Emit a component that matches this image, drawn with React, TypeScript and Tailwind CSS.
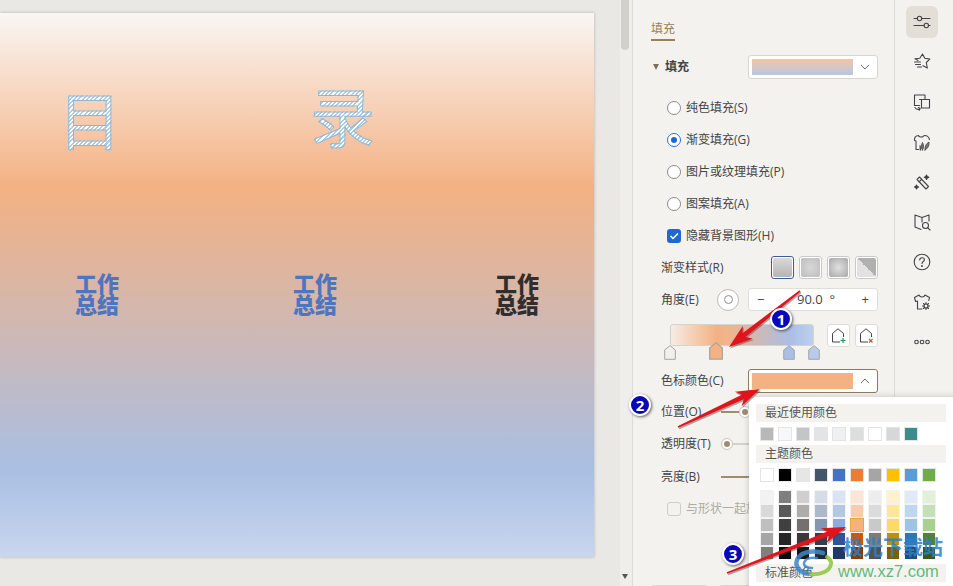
import React from "react";

const recent = ["#b8b8b8", "#f5f7fa", "#c4c5c6", "#e3e4e5", "#eef0f2", "#dcdddd", "#ffffff", "#d5d7d8", "#3f8a8c"];
const theme = ["#ffffff", "#000000", "#e7e6e6", "#44546a", "#4472c4", "#ed7d31", "#a5a5a5", "#ffc000", "#5b9bd5", "#70ad47"];
const shades = [
  ["#f2f2f2", "#d9d9d9", "#bfbfbf", "#a6a6a6", "#7f7f7f"],
  ["#7f7f7f", "#595959", "#404040", "#262626", "#0d0d0d"],
  ["#d0cece", "#aeabab", "#757070", "#3a3838", "#171616"],
  ["#d6dce5", "#adb9ca", "#8497b0", "#333f50", "#222a35"],
  ["#dae3f3", "#b4c7e7", "#8faadc", "#2f5597", "#203864"],
  ["#fbe5d6", "#f8cbad", "#f4b183", "#c55a11", "#843c0c"],
  ["#ededed", "#dbdbdb", "#c9c9c9", "#7b7b7b", "#525252"],
  ["#fff2cc", "#ffe699", "#ffd966", "#bf9000", "#7f6000"],
  ["#deebf7", "#bdd7ee", "#9dc3e6", "#2e75b6", "#1f4e79"],
  ["#e2f0d9", "#c5e0b4", "#a9d18e", "#548235", "#385723"],
];

function Icon({ children }: { children: React.ReactNode }) {
  return (
    <svg width="20" height="20" viewBox="0 0 20 20" fill="none" stroke="#444" strokeWidth="1.1" strokeLinecap="round" strokeLinejoin="round">
      {children}
    </svg>
  );
}

const railIcons = [
  <Icon key="a"><path d="M2 6.500h3.500M10 6.500h8M2 13.500h10M16.500 13.500h1.500" /><circle cx="7.500" cy="6.500" r="2.200" /><circle cx="14.300" cy="13.500" r="2.200" /></Icon>,
  <Icon key="b"><path d="M6 8.500L3 6.800l4.800-.6L10.500 2l2.300 4.300 5 .8-3.500 3.400 1 5.500-4.300-2.300" /><path d="M2.500 10h6M3.500 12.500h5M5.500 15h4" /></Icon>,
  <Icon key="c"><path d="M7.500 13.500H2.500V3H13v4.500" /><path d="M7.500 7.500h10V16H9.500V7.500z" /><path d="M3 15.500c1 1.800 3 2.200 5 1.200M6.500 15.500l1.700 1-1 1.800" /></Icon>,
  <Icon key="d"><path d="M6.500 3.500C4 3.500 2 5.500 2.500 8.500L4 9v8.500h3M6.500 3.500c.5 1.500 3 2 4.500 1 .5-.5 1-1 2-1 2 0 4 2 4.500 4" /><path d="M10.500 18c-1.500-2.500-1.500-5 0-7.500 1.500 2.500 1.500 5 0 7.500zM13 18c-.5-3 1-6.500 4-8 .5 3.500-1 6.500-4 8zM8.500 18c-.5-1.500-.8-3-.5-4.500 1.200 1.300 1.500 3 .5 4.500z" fill="#777" strokeWidth=".8" /></Icon>,
  <Icon key="e"><path d="M5 7.500L7.500 5l9 9.500-2.500 2.500zM7 10l2.500-2.500" /><path d="M14.500 3l.8 1.500 1.500.7-1.500.8-.8 1.500-.7-1.500-1.500-.8 1.500-.7zM4.500 13l.7 1.300 1.300.7-1.300.7-.7 1.300-.7-1.300L2.500 15l1.300-.7z" fill="#444" /></Icon>,
  <Icon key="f"><path d="M10 5.500L3 3v12l6 2.500M10 5.500L17 3v6M10 5.500V10" /><circle cx="13.500" cy="13.500" r="3" /><path d="M15.800 15.800l2.200 2.200" /></Icon>,
  <Icon key="g"><circle cx="10" cy="10" r="7.800" /><path d="M7.700 8c0-1.400 1-2.300 2.400-2.300s2.300.9 2.300 2c0 1.800-2.400 1.800-2.400 3.800" /><circle cx="10" cy="14" r=".4" fill="#444" /></Icon>,
  <Icon key="h"><path d="M7 3L2.500 5.500l1 4 2-.5v8H10M13 3l4.500 2.500-.7 3M7 3c.5 1.500 1.500 2 3 2s2.500-.5 3-2" /><circle cx="14" cy="14" r="2" /><path d="M14 10.500v1.500M14 16v1.500M10.500 14H12M16 14h1.500M11.500 11.500l1 1M15.500 15.500l1 1M16.500 11.500l-1 1M12.500 15.500l-1 1" /></Icon>,
  <Icon key="i"><circle cx="4.500" cy="10" r="1.800" /><circle cx="10" cy="10" r="1.800" /><circle cx="15.500" cy="10" r="1.800" /></Icon>,
];

function Radio({ label, on }: { label: string; on?: boolean }) {
  return (
    <div className="flex h-8 items-center gap-[5px] pl-[34px]">
      {on ? (
        <span className="flex h-[14px] w-[14px] items-center justify-center rounded-full border border-[#2a6fd6] bg-white">
          <span className="h-[6px] w-[6px] rounded-full bg-[#1f68d4]" />
        </span>
      ) : (
        <span className="h-[14px] w-[14px] rounded-full border border-[#8a8a8a] bg-white" />
      )}
      <span>{label}</span>
    </div>
  );
}

function StyleBtn({ bg, active }: { bg: string; active?: boolean }) {
  return (
    <div className={`flex h-[23px] w-[23px] items-center justify-center rounded-[3px] border ${active ? "border-[#3b5f95]" : "border-[#c9c9c9]"} bg-white p-[1px]`}>
      <div className="h-full w-full rounded-[2px]" style={{ background: bg }} />
    </div>
  );
}

function Stop({ color, big, ml }: { color: string; big?: boolean; ml: string }) {
  const w = big ? 16 : 12;
  const h = big ? 18 : 15;
  return (
    <svg width={w} height={h} viewBox="0 0 12 15" className={`absolute bottom-0 ${ml}`}>
      <path d="M.7 5L6 .7 11.300 5v9.300H.7z" fill={color} stroke="#a8a59f" strokeWidth="1" />
    </svg>
  );
}

function HouseBtn({ mark }: { mark: "add" | "del" }) {
  return (
    <div className="flex h-[23px] w-[23px] items-center justify-center rounded-[3px] border border-[#dedcd7] bg-white">
      <svg width="17" height="17" viewBox="0 0 17 17" fill="none" stroke="#444" strokeWidth="1">
        <path d="M10 15H2.500V6.500L8 1.800l5.500 4.700V10" />
        {mark === "add" ? (
          <path d="M13 11v5M10.500 13.500h5" stroke="#1f9a57" strokeWidth="1.200" />
        ) : (
          <path d="M11 12l3.500 3.500M14.500 12L11 15.500" stroke="#d8503f" strokeWidth="1.200" />
        )}
      </svg>
    </div>
  );
}

function Row({ label, children, mt }: { label: string; children?: React.ReactNode; mt: string }) {
  return (
    <div className={`flex items-center ${mt} pl-[28px] pr-[16px]`}>
      <span className="w-[60px] shrink-0 whitespace-nowrap">{label}</span>
      {children}
    </div>
  );
}

function Swatch({ c }: { c: string }) {
  return <div className="h-[14px] w-[14px] border border-[#e4e4e4]" style={{ background: c }} />;
}

function Arrow({ x1, y1, x2, y2 }: { x1: number; y1: number; x2: number; y2: number }) {
  const dx = x2 - x1;
  const dy = y2 - y1;
  const len = Math.hypot(dx, dy);
  const ux = dx / len;
  const uy = dy / len;
  const nx = -uy;
  const ny = ux;
  const headL = 24;
  const bx = x2 - ux * headL;
  const by = y2 - uy * headL;
  const inset = x2 - ux * (headL - 5);
  const insetY = y2 - uy * (headL - 5);
  const p = (x: number, y: number, n: number) => `${x + nx * n},${y + ny * n}`;
  const pts = [p(x1, y1, 0.8), p(inset, insetY, 2.4), p(bx, by, 8), `${x2},${y2}`, p(bx, by, -8), p(inset, insetY, -2.4), p(x1, y1, -0.8)].join(" ");
  return (
    <>
      <polygon points={pts} fill="#5a3a3a" opacity="0.45" transform="translate(1 1.500)" />
      <polygon points={pts} fill="#e0141c" />
    </>
  );
}

function Badge({ n, cls }: { n: string; cls: string }) {
  return (
    <div className={`absolute flex h-[22px] w-[22px] items-center justify-center rounded-full border-2 border-white bg-[#0707b8] text-[15px] font-bold text-white shadow-[1px_1px_3px_rgba(0,0,0,0.6)] ${cls}`}>
      {n}
    </div>
  );
}

function WorkText({ cls, color }: { cls: string; color: string }) {
  return (
    <div className={`absolute text-center text-[22px] leading-[21px] font-black tracking-[0px] ${cls}`} style={{ color }}>
      <div>工作</div>
      <div>总结</div>
    </div>
  );
}

const hatch =
  "text-transparent bg-clip-text bg-[repeating-linear-gradient(135deg,#ffffff_0px,#ffffff_1.5px,#a9cbe3_1.5px,#a9cbe3_3px)] [-webkit-text-stroke:1px_#94b3cc] font-normal";

export default function App() {
  return (
    <div className="relative flex h-[586px] w-[953px] overflow-hidden bg-[#e9e8e4] font-['Open_Sans','Noto_Sans_CJK_SC',sans-serif] text-[12px] text-[#444]">
      {/* canvas */}
      <div className="w-[620px] shrink-0 pt-[13px]">
        <div className="relative h-[544px] w-[594px] bg-[linear-gradient(180deg,#f9f6f4_0%,#f4b183_32%,#a9bfe3_84%,#c9d6ee_100%)] shadow-[0_0_3px_rgba(0,0,0,0.25)]">
          <div className={`absolute left-[59px] top-[73px] text-[62px] leading-[70px] ${hatch}`}>目</div>
          <div className={`absolute left-[310px] top-[69px] text-[65px] leading-[70px] ${hatch}`}>录</div>
          <WorkText cls="left-[75px] top-[260px]" color="#4f75bf" />
          <WorkText cls="left-[293px] top-[260px]" color="#4f75bf" />
          <WorkText cls="left-[495px] top-[260px]" color="#2f2f2f" />
        </div>
      </div>
      {/* scrollbar */}
      <div className="relative w-[13px] shrink-0 border-r border-[#dcdad5] bg-[#efeeea]">
        <div className="ml-[1px] h-[50px] w-[8px] rounded-b-[4px] bg-[#d2d0cb]" />
        <div className="absolute bottom-[7px] left-[2px] h-0 w-0 border-x-[3px] border-t-[5px] border-x-transparent border-t-[#555]" />
      </div>
      {/* panel */}
      <div className="w-[262px] shrink-0 border-r border-[#dcdad5] bg-[#f3f2ee]">
        <div className="ml-[18px] mt-[20px] w-fit border-b-2 border-[#9a8059] pb-[2px] leading-[17px] text-[#9a8059]">填充</div>
        <div className="mt-[14px] flex items-center pl-[20px] pr-[16px]">
          <span className="h-0 w-0 border-x-[3px] border-t-[6px] border-x-transparent border-t-[#7d705c]" />
          <span className="ml-[6px] font-bold">填充</span>
          <div className="ml-auto flex h-[24px] w-[130px] items-center rounded-[3px] border border-[#d8d6d1] bg-white pl-[3px]">
            <div className="h-[16px] w-[102px] bg-[linear-gradient(180deg,#f4c5a5,#b6c7e3)]" />
            <svg width="24" height="12" viewBox="0 0 24 12" fill="none" stroke="#666"><path d="M8 4l4 4 4-4" /></svg>
          </div>
        </div>
        <div className="mt-[13px]">
          <Radio label="纯色填充(S)" />
          <Radio label="渐变填充(G)" on />
          <Radio label="图片或纹理填充(P)" />
          <Radio label="图案填充(A)" />
          <div className="flex h-8 items-center gap-[5px] pl-[34px]">
            <span className="flex h-[14px] w-[14px] items-center justify-center rounded-[3px] bg-[#1f68d4]">
              <svg width="10" height="10" viewBox="0 0 10 10" fill="none" stroke="#fff" strokeWidth="1.500"><path d="M1.500 5l2.500 2.500 5-5" /></svg>
            </span>
            <span>隐藏背景图形(H)</span>
          </div>
        </div>
        <Row label="渐变样式(R)" mt="mt-[4px]">
          <div className="ml-auto flex w-[107px] justify-between">
            <StyleBtn active bg="linear-gradient(180deg,#d8d8d8,#b5b5b5)" />
            <StyleBtn bg="radial-gradient(circle,#d8d8d8,#bdbdbd)" />
            <StyleBtn bg="radial-gradient(circle,#e0e0e0,#a8a8a8)" />
            <StyleBtn bg="linear-gradient(45deg,#e2e2e2 50%,#b0b0b0 50%)" />
          </div>
        </Row>
        <Row label="角度(E)" mt="mt-[9px]">
          <div className="-ml-[4px] flex h-[22px] w-[22px] items-center justify-center rounded-full border border-[#bdbbb6] bg-white">
            <span className="h-[9px] w-[9px] rounded-full border border-[#8f8f8f]" />
          </div>
          <div className="ml-auto flex h-[23px] w-[130px] items-center justify-between rounded-[3px] border border-[#e0ded9] bg-white px-[8px] text-[13px]">
            <span>−</span>
            <span className="ml-[6px]">90.0&nbsp;&nbsp;°</span>
            <span>+</span>
          </div>
        </Row>
        <div className="mt-[13px] flex h-[36px] pl-[31px] pr-[16px]">
          <div className="relative h-full w-[162px]">
            <div className="absolute left-[6px] top-0 h-[22px] w-[144px] rounded-[3px] border border-[#d5d3ce] bg-[linear-gradient(90deg,#f6ece5_0%,#f4b183_32%,#f0b48d_40%,#a9bfe3_84%,#bcd0ee_100%)]" />
            <Stop color="#f3efec" ml="left-0" />
            <Stop color="#f4b183" big ml="left-[44px]" />
            <Stop color="#a9bfe3" ml="left-[119px]" />
            <Stop color="#b7cbea" ml="left-[144px]" />
          </div>
          <div className="ml-auto flex w-[51px] justify-between">
            <HouseBtn mark="add" />
            <HouseBtn mark="del" />
          </div>
        </div>
        <Row label="色标颜色(C)" mt="mt-[9px]">
          <div className="ml-auto flex h-[24px] w-[130px] items-center rounded-[3px] border border-[#8d7a5e] bg-white pl-[3px]">
            <div className="h-[16px] w-[102px] bg-[#f4b183]" />
            <svg width="24" height="12" viewBox="0 0 24 12" fill="none" stroke="#666"><path d="M8 8l4-4 4 4" /></svg>
          </div>
        </Row>
        <Row label="位置(O)" mt="mt-[10px]">
          <div className="flex items-center">
            <span className="h-[2px] w-[18px] bg-[#a08c6e]" />
            <span className="flex h-[12px] w-[12px] items-center justify-center rounded-full border border-[#c6c4bf] bg-white"><span className="h-[6px] w-[6px] rounded-full bg-[#a08c6e]" /></span>
          </div>
        </Row>
        <Row label="透明度(T)" mt="mt-[14px]">
          <div className="flex items-center">
            <span className="flex h-[12px] w-[12px] items-center justify-center rounded-full border border-[#c6c4bf] bg-white"><span className="h-[6px] w-[6px] rounded-full bg-[#a08c6e]" /></span>
            <span className="h-[2px] w-[18px] bg-[#d3d1cc]" />
          </div>
        </Row>
        <Row label="亮度(B)" mt="mt-[15px]">
          <span className="h-[2px] w-[28px] bg-[#a08c6e]" />
        </Row>
        <div className="mt-[14px] flex items-center gap-[5px] pl-[34px] text-[#adaba6]">
          <span className="h-[14px] w-[14px] rounded-[3px] border border-[#cfcdc8] bg-[#f3f2ee]" />
          <span className="whitespace-nowrap">与形状一起旋转(W)</span>
        </div>
        <div className="mt-[67px] flex gap-[10px] pl-[18px]">
          <div className="h-[24px] w-[57px] rounded-[3px] border border-[#d8d6d1] bg-white" />
          <div className="h-[24px] w-[57px] rounded-[3px] border border-[#d8d6d1] bg-white" />
        </div>
      </div>
      {/* rail */}
      <div className="flex flex-1 flex-col items-center bg-[#f3f2ee] pr-[4px] pt-[2px]">
        {railIcons.map((ic, i) => (
          <div key={i} className="flex h-[40px] items-center justify-center">
            <div className={`flex h-[32px] w-[32px] items-center justify-center rounded-[6px] ${i === 0 ? "bg-[#e4dfd6]" : ""}`}>{ic}</div>
          </div>
        ))}
      </div>
      {/* colour popup */}
      <div className="absolute left-[749px] top-[397px] h-[200px] w-[215px] rounded-[6px] bg-white px-[7px] pt-[7px] shadow-[0_0_6px_rgba(0,0,0,0.2)]">
        <div className="flex h-[18px] w-[190px] items-center bg-[#f3f2ef] pl-[9px] text-[#555]">最近使用颜色</div>
        <div className="mt-[5px] flex gap-[4px] pl-[4px]">
          {recent.map((c, i) => <Swatch key={i} c={c} />)}
        </div>
        <div className="mt-[4px] flex h-[18px] w-[190px] items-center bg-[#f3f2ef] pl-[9px] text-[#555]">主题颜色</div>
        <div className="mt-[5px] flex gap-[4px] pl-[4px]">
          {theme.map((c, i) => <Swatch key={i} c={c} />)}
        </div>
        <div className="mt-[8px] flex gap-[4px] pl-[4px]">
          {shades.map((col, i) => (
            <div key={i} className="flex flex-col">
              {col.map((c, j) => (
                <div key={j} className={`h-[14px] w-[14px] border ${i === 5 && j === 2 ? "border-[#e2ad2c]" : "border-[#f2f2f2]"}`} style={{ background: c }} />
              ))}
            </div>
          ))}
        </div>
        <div className="mt-[4px] flex h-[18px] w-[190px] items-center bg-[#f3f2ef] pl-[9px] text-[#555]">标准颜色</div>
      </div>
      {/* watermark */}
      <svg width="42" height="34" viewBox="0 0 42 34" fill="none" className="absolute left-[793px] top-[548px] opacity-85">
        <path d="M30 5C18 1 5 5 3.500 14c-1 7 6 12 15 12" stroke="#3f87c9" strokeWidth="4.500" strokeLinecap="round" />
        <path d="M24 10c-7-1-12 1-13 5-.5 3 3 5 8 5" stroke="#3f87c9" strokeWidth="2.500" strokeLinecap="round" />
        <path d="M18 26c10 1 19-3 20-10 .3-3-1-5-4-7" stroke="#8cc63f" strokeWidth="4" strokeLinecap="round" />
      </svg>
      <div className="absolute left-[843px] top-[537px] text-[20px] leading-[22px] font-bold whitespace-nowrap text-[#2f7fc8]/85">极光下载站</div>
      <div className="absolute left-[838px] top-[561px] font-['Liberation_Sans',sans-serif] text-[16.5px] leading-[20px] whitespace-nowrap text-[#4fb26b]/90">www.xz7.com</div>
      {/* annotations */}
      <svg width="953" height="586" className="pointer-events-none absolute left-0 top-0">
        <Arrow x1={800} y1={291} x2={729} y2={347} />
        <Arrow x1={678} y1={427} x2={760} y2={389} />
        <Arrow x1={727} y1={573} x2={846} y2={527} />
      </svg>
      <Badge n="1" cls="left-[770px] top-[308px]" />
      <Badge n="2" cls="left-[629px] top-[394px]" />
      <Badge n="3" cls="left-[722px] top-[543px]" />
    </div>
  );
}
